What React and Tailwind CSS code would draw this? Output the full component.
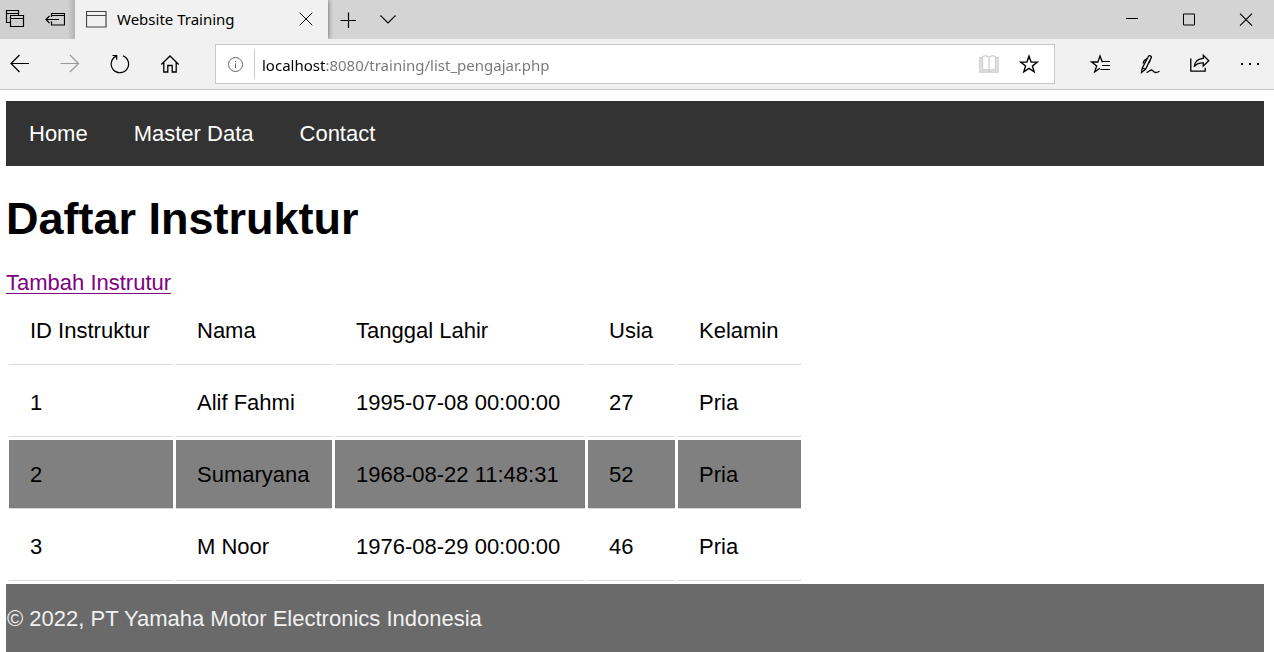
import React from "react";

function Icon({ w = 20, h = 20, className = "", children }) {
  return (
    <svg
      width={w}
      height={h}
      viewBox={`0 0 ${w} ${h}`}
      fill="none"
      stroke="currentColor"
      strokeWidth="1.2"
      className={`shrink-0 ${className}`}
      aria-hidden="true"
    >
      {children}
    </svg>
  );
}

function IconButton({ label, className = "w-10", children }) {
  return (
    <button type="button" aria-label={label} className={`flex h-full shrink-0 items-center justify-center ${className}`}>
      {children}
    </button>
  );
}

function TitleBar() {
  return (
    <div className="flex h-[39px] bg-[#d4d4d4] text-black">
      <div className="flex gap-[5px] bg-linear-to-r from-[#d0d0d0] from-90% to-[#b4b4b4]">
        <IconButton label="Show tab previews" className="w-[30px]">
          <Icon>
            <path d="M5 12.500H1.500v-12h12V5M1.500 3.500h12" />
            <path d="M5.500 5.500h13v11h-13zM5.500 8.500h13" />
          </Icon>
        </IconButton>
        <IconButton label="Set these tabs aside">
          <Icon>
            <path d="M6.500 7V3.500h13v11.500h-13v-3.500M6.500 5.500h13" />
            <path d="M14 9.500H1M4.500 6L1 9.500 4.500 13" />
          </Icon>
        </IconButton>
      </div>
      <div className="flex w-[253px] items-center bg-[#f1f1f1] pr-[2px] pb-[2px] pl-[11px] shadow-[0_0_5px_rgba(0,0,0,0.6)] [clip-path:inset(0_-6px_0_0)]">
        <Icon w={21} h={18} className="text-[#444]">
          <path d="M.5 1.500h19.500v15.500h-19.500zM.5 5.500h19.500" />
        </Icon>
        <span className="ml-[10px] flex-1 whitespace-nowrap font-['Noto_Sans',sans-serif] text-[15px] leading-5">
          Website Training
        </span>
        <IconButton label="Close tab">
          <Icon w={14} h={14}>
            <path d="M.7.7l12.600 12.600M13.300.7L.7 13.300" strokeWidth="1" />
          </Icon>
        </IconButton>
      </div>
      <IconButton label="New tab">
        <Icon w={16} h={16}>
          <path d="M8.500.5v16M.5 8.500h16" />
        </Icon>
      </IconButton>
      <IconButton label="Tab actions">
        <Icon w={16} h={10}>
          <path d="M.5.5l7.500 7.500L15.500.5" strokeWidth="1.100" />
        </Icon>
      </IconButton>
      <div className="flex-1" />
      <IconButton label="Minimize" className="w-[57px]">
        <Icon w={14} h={13}>
          <path d="M1 5.500h12" strokeWidth="1" />
        </Icon>
      </IconButton>
      <IconButton label="Maximize" className="w-[57px]">
        <Icon w={14} h={14}>
          <path d="M1.500 1h11v11h-11z" strokeWidth="1" />
        </Icon>
      </IconButton>
      <IconButton label="Close window" className="w-[57px]">
        <Icon w={14} h={14}>
          <path d="M1 .7l12 12M13 .7l-12 12" strokeWidth="1.100" />
        </Icon>
      </IconButton>
    </div>
  );
}

function Toolbar() {
  return (
    <div className="flex h-[51px] items-center border-b border-[#c8c8c8] bg-[#f1f1f1] pr-1 text-black">
      <div className="flex h-10 gap-[10px]">
        <IconButton label="Back">
          <Icon>
            <path d="M19 9.500H1M9.500 1L1 9.500 9.500 18" />
          </Icon>
        </IconButton>
        <IconButton label="Forward">
          <Icon className="text-[#999]">
            <path d="M.5 9.500h18M10 1l8.500 8.500L10 18" />
          </Icon>
        </IconButton>
        <IconButton label="Refresh">
          <Icon>
            <path d="M13 1.900A8.700 8.700 0 1 1 6.300 2.100" />
            <path d="M2.500 1.500h4.200v4.300" />
          </Icon>
        </IconButton>
        <IconButton label="Home">
          <Icon>
            <path d="M1.300 10.500L10 2l8.700 8.500M3.800 8.500v9.500h4v-6.500h4.400V18h4V8.500" strokeWidth="1.300" />
          </Icon>
        </IconButton>
      </div>
      <form
        className="mx-[25px] flex h-10 flex-1 items-center border border-[#c8c8c8] bg-white pr-[5px]"
        onSubmit={(e) => e.preventDefault()}
      >
        <IconButton label="Site information" className="w-[38px]">
          <Icon w={16} h={16} className="text-[#666]">
            <circle cx="8.500" cy="8.500" r="7" strokeWidth="1" />
            <path d="M8.500 7.300v4.700M8.500 4.800v1.200" strokeWidth="1" />
          </Icon>
        </IconButton>
        <div className="h-[30px] w-px bg-[#c8c8c8]" />
        <input
          type="text"
          aria-label="Address"
          defaultValue="localhost:8080/training/list_pengajar.php"
          className="ml-[7px] h-[22px] min-w-0 flex-1 bg-[linear-gradient(to_right,#000_64px,#767676_64px)] bg-clip-text pt-[2px] font-['Noto_Sans',sans-serif] text-[15px] leading-5 text-transparent outline-none"
        />
        <IconButton label="Reading view">
          <Icon className="text-[#cccccc]">
            <path d="M3 3.500H.8v14.700h18.400V3.500H17" fill="#e8e8e8" />
            <path d="M10 3.500C8.500 1.600 5 1.600 3.500 2.500v13.700c2-.8 5-.8 6.500.8 1.500-1.600 4.500-1.600 6.500-.8V2.500C15 1.600 11.500 1.600 10 3.500zM10 3.500V18" fill="#fff" />
          </Icon>
        </IconButton>
        <IconButton label="Add to favorites">
          <Icon>
            <path d="M10 2.200l2.100 5.900h6.200l-4.900 3.800 1.800 6L10 14.300l-5.200 3.600 1.800-6L1.700 8.100h6.200z" strokeWidth="1.400" />
          </Icon>
        </IconButton>
      </form>
      <div className="flex h-10 gap-[10px]">
        <IconButton label="Favorites">
          <Icon>
            <path d="M13 7.500h-.9L10 2 7.900 8H1.600l5.100 4-2 5.800L10 14.300" strokeWidth="1.300" />
            <path d="M12 7.500h8M12 11.500h8M10.500 15.500h9.500" strokeWidth="1.200" />
          </Icon>
        </IconButton>
        <IconButton label="Add notes">
          <Icon>
            <path d="M1.500 18.500l.8-4.500L8.500 2.300c.7-1.400 3.400-.4 2.800 1.300L5.500 15.300zM2.300 14l3.200 1.300M7.500 4.200L4.300 6.500 3 9.500M10.600 5l-1.500 4" strokeWidth="1.300" />
            <path d="M6.500 18.500c2.500-.4 3.200-2.600 5-2.500 2 .1 1.700 2.600 4 2.500 1.400 0 2.500-.4 4-1.300" strokeWidth="1.300" />
          </Icon>
        </IconButton>
        <IconButton label="Share">
          <Icon>
            <path d="M.8 4.500v12.700h14.400v-3.500" strokeWidth="1.300" />
            <path d="M13.300 1.300l5.500 5.400-5.500 5.200V8.800C9 8.600 6.300 9.600 4.300 12.700 4.700 7.500 8 4.600 13.300 4.300z" strokeWidth="1.300" />
          </Icon>
        </IconButton>
        <IconButton label="More">
          <Icon>
            <path d="M1 10h2M9 10h2M17 10h2" strokeWidth="2" />
          </Icon>
        </IconButton>
      </div>
    </div>
  );
}

const columns = [
  ["ID Instruktur", "w-[164px]"],
  ["Nama", "w-[156px]"],
  ["Tanggal Lahir", "w-[250px]"],
  ["Usia", "w-[87px]"],
  ["Kelamin", "w-[123px]"],
];

const rows = [
  ["1", "Alif Fahmi", "1995-07-08 00:00:00", "27", "Pria"],
  ["2", "Sumaryana", "1968-08-22 11:48:31", "52", "Pria"],
  ["3", "M Noor", "1976-08-29 00:00:00", "46", "Pria"],
];

const highlightedId = "2";

export default function App() {
  return (
    <div className="min-h-screen bg-white">
      <TitleBar />
      <Toolbar />
      <div className="pt-[11px] pr-[10px] pl-[6px] font-['Liberation_Sans',Arial,sans-serif] text-[22px] leading-[26px] text-black">
        <nav className="flex h-[65px] items-center gap-[2px] bg-[#333] pl-px text-white">
          <a href="#home" className="px-[22px]">Home</a>
          <button type="button" className="px-[22px]">Master Data</button>
          <a href="#contact" className="px-[22px]">Contact</a>
        </nav>
        <h1 className="mt-[27px] text-[45px] leading-[52px] font-bold">Daftar Instruktur</h1>
        <div className="mt-[27px] flex">
          <a href="#tambah" className="border-b border-[purple] leading-[21px] text-[purple]">
            Tambah Instrutur
          </a>
        </div>
        <table className="-mt-px border-separate border-spacing-[3px]">
          <thead>
            <tr>
              {columns.map(([name, width]) => (
                <th key={name} scope="col" className={`h-[69px] border-b border-[#dadada] px-[21px] pt-[2px] text-left font-normal ${width}`}>
                  {name}
                </th>
              ))}
            </tr>
          </thead>
          <tbody>
            {rows.map((row) => (
              <tr key={row[0]}>
                {row.map((cell, i) => (
                  <td
                    key={i}
                    className={`h-[69px] border-b border-[#dadada] px-[21px] pt-[2px] whitespace-nowrap ${row[0] === highlightedId ? "bg-[gray]" : ""}`}
                  >
                    {cell}
                  </td>
                ))}
              </tr>
            ))}
          </tbody>
        </table>
        <footer className="bg-[#6a6a6a] pt-[22px] pb-5 pl-px text-[#f1f1f1]">© 2022, PT Yamaha Motor Electronics Indonesia</footer>
      </div>
    </div>
  );
}
